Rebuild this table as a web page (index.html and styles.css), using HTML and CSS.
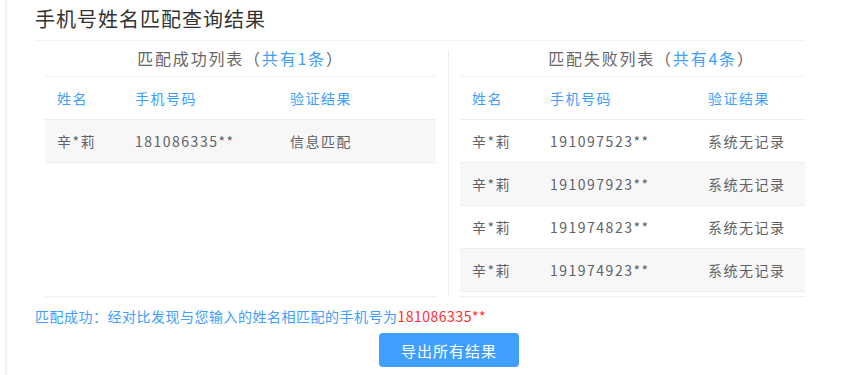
FILE: index.html
```html
<!DOCTYPE html>
<html lang="zh-CN">
<head>
  <meta charset="UTF-8">
  <title>手机号姓名匹配查询结果</title>
  <meta name="viewport" content="width=device-width, initial-scale=1.0">
  <link rel="stylesheet" href="styles.css">
</head>
<body>
  <div class="page">
    <h2 class="page-title">手机号姓名匹配查询结果</h2>

    <div class="panels">
      <div class="panel panel-ok">
        <div class="caption">匹配成功列表（<span class="count">共有1条</span>）</div>
        <div class="table-wrap">
          <table>
            <thead>
              <tr><th class="col-name">姓名</th><th class="col-phone">手机号码</th><th>验证结果</th></tr>
            </thead>
            <tbody>
              <tr class="shade"><td>辛*莉</td><td>181086335**</td><td>信息匹配</td></tr>
            </tbody>
          </table>
        </div>
      </div>

      <div class="split"></div>

      <div class="panel panel-fail">
        <div class="caption">匹配失败列表（<span class="count">共有4条</span>）</div>
        <div class="table-wrap">
          <table>
            <thead>
              <tr><th class="col-name">姓名</th><th class="col-phone">手机号码</th><th>验证结果</th></tr>
            </thead>
            <tbody>
              <tr><td>辛*莉</td><td>191097523**</td><td>系统无记录</td></tr>
              <tr class="shade"><td>辛*莉</td><td>191097923**</td><td>系统无记录</td></tr>
              <tr><td>辛*莉</td><td>191974823**</td><td>系统无记录</td></tr>
              <tr class="shade"><td>辛*莉</td><td>191974923**</td><td>系统无记录</td></tr>
            </tbody>
          </table>
        </div>
      </div>
    </div>

    <p class="result-msg">匹配成功：经对比发现与您输入的姓名相匹配的手机号为<span class="hit">181086335**</span></p>

    <div class="actions">
      <button class="btn-export">导出所有结果</button>
    </div>
  </div>
</body>
</html>
```

FILE: styles.css
```css
:root {
  --blue: #409eff;
  --line: #ebeef5;
  --text: #606266;
}

body {
  margin: 0;
  padding-left: 5px;
  background: #fff;
  font-family: "Noto Sans CJK SC", "Noto Sans", sans-serif;
  color: var(--text);
}

.page {
  border-left: 2px solid #eef1f6;
  padding: 0 2px 0 28px;
  min-height: 375px;
  box-sizing: border-box;
}

.page-title {
  width: 770px;
  margin: 0;
  padding-top: 6px;
  height: 34px;
  line-height: 26px;
  font-size: 20px;
  font-weight: normal;
  letter-spacing: 1px;
  color: #333;
  border-bottom: 1px solid #f3f3f3;
}

/* two result lists side by side */
.panels {
  display: flex;
  width: 760px;
  margin-left: 10px;
}

.panel-ok {
  width: 391px;
}

.panel-fail {
  flex: 1;
}

.split {
  width: 1px;
  background: var(--line);
  margin: 9px 11px 0 12px;
}

.caption {
  height: 35px;
  line-height: 35px;
  text-align: center;
  font-size: 16px;
  letter-spacing: 1.8px;
  color: #666;
  border-bottom: 1px solid #f2f2f2;
}

.panel-fail .caption {
  padding-left: 38px;
}

.caption .count {
  color: var(--blue);
}

.table-wrap {
  height: 219px;
  border-bottom: 1px solid #f0f0f0;
}

table {
  width: 100%;
  border-collapse: collapse;
  font-size: 14px;
  letter-spacing: 1.5px;
}

th, td {
  text-align: left;
  padding: 0 0 0 12px;
  height: 42px;
  border-bottom: 1px solid var(--line);
  font-weight: normal;
}

th {
  color: var(--blue);
}

.col-name {
  width: 66px;
}

.col-phone {
  width: 143px;
}

.panel-fail .col-phone {
  width: 146px;
}

tr.shade td {
  background: #f7f7f8;
}

.result-msg {
  margin: 9px 0 0;
  line-height: 20px;
  font-size: 14px;
  letter-spacing: 0.5px;
  color: var(--blue);
}

.result-msg .hit {
  color: #ff2d2d;
}

.actions {
  text-align: center;
  margin-top: 7px;
}

.btn-export {
  width: 140px;
  height: 34px;
  border: none;
  border-radius: 4px;
  background: var(--blue);
  color: #fff;
  font-family: inherit;
  font-size: 15px;
  letter-spacing: 1px;
  cursor: pointer;
}
```
